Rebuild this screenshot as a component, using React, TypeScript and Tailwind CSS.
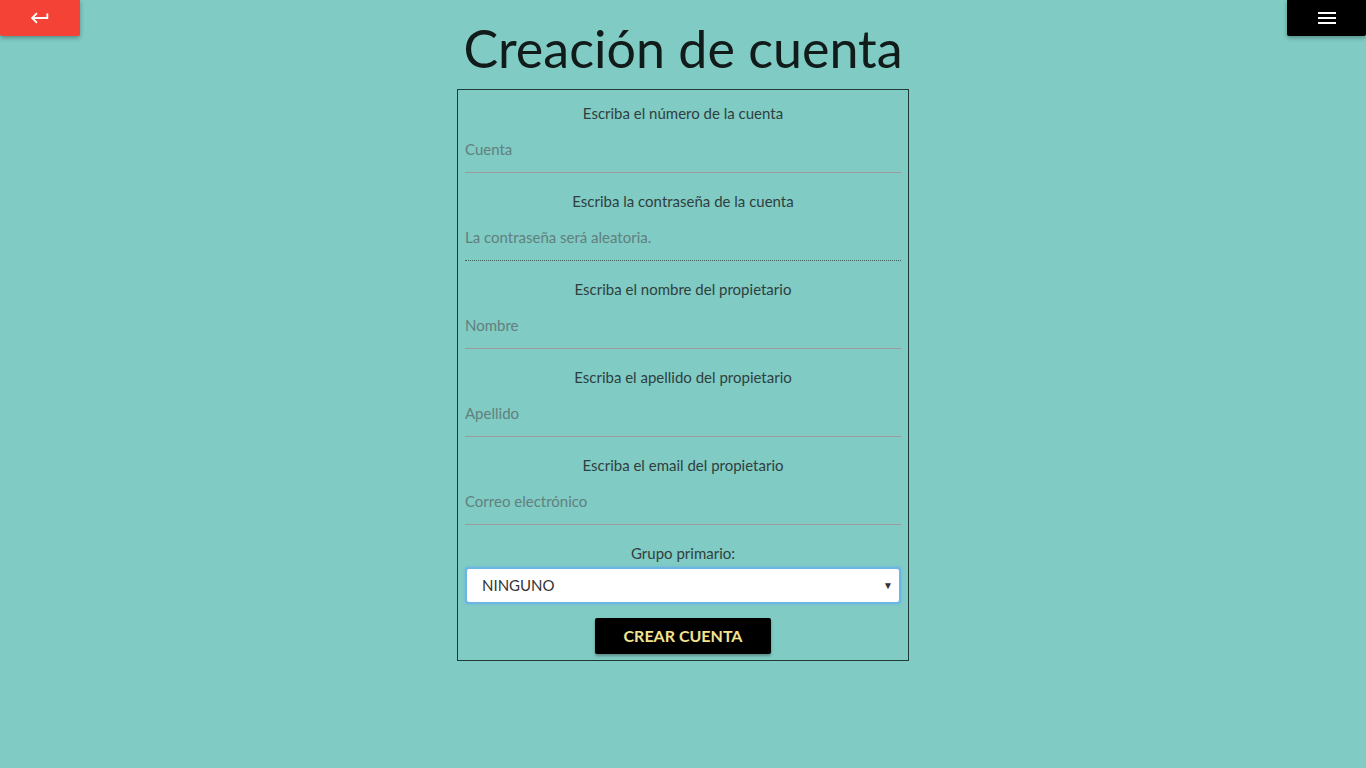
import React from "react";

const fields = [
  { label: "Escriba el número de la cuenta", ph: "Cuenta" },
  { label: "Escriba la contraseña de la cuenta", ph: "La contraseña será aleatoria.", disabled: true },
  { label: "Escriba el nombre del propietario", ph: "Nombre" },
  { label: "Escriba el apellido del propietario", ph: "Apellido" },
  { label: "Escriba el email del propietario", ph: "Correo electrónico" },
];

export default function App() {
  return (
    <div
      className="min-h-[768px] w-full bg-[#80cbc4] relative"
      style={{ fontFamily: "Lato, 'Open Sans', sans-serif" }}
    >
      <button className="absolute left-0 top-0 w-[80px] h-[36px] bg-[#f44336] rounded-b-[2px] flex items-center justify-center shadow-[0_2px_4px_rgba(0,0,0,0.3)]">
        <svg width="22" height="22" viewBox="0 0 24 24" fill="white">
          <path d="M19 7v4H5.83l3.58-3.59L8 6l-6 6 6 6 1.41-1.41L5.83 13H21V7z" />
        </svg>
      </button>
      <button className="absolute right-0 top-0 w-[79px] h-[36px] bg-black rounded-b-[2px] flex items-center justify-center shadow-[0_2px_4px_rgba(0,0,0,0.3)]">
        <svg width="24" height="24" viewBox="0 0 24 24" fill="white">
          <path d="M3 18h18v-2H3v2zm0-5h18v-2H3v2zm0-7v2h18V6H3z" />
        </svg>
      </button>

      <div className="flex flex-col items-center pt-[17px]">
        <h1 className="text-[52px] leading-[62px] text-[#111b1a] font-normal mb-[10px]">
          Creación de cuenta
        </h1>
        <div className="w-[452px] border border-[#1f3b38] px-[7px] pb-[6px]">
          {fields.map((f) => (
            <div key={f.label} className="pt-[12px] mb-[5px]">
              <div className="text-center text-[15px] leading-[22px] text-[#2f3f3e]">{f.label}</div>
              <input
                disabled={f.disabled}
                placeholder={f.ph}
                className={
                  "block w-full h-[49px] pt-[2px] bg-transparent outline-none text-[15px] placeholder:text-[#62807d] text-[#62807d] " +
                  (f.disabled
                    ? "border-b border-dotted border-[#3f5f5c]"
                    : "border-b border-[#9e9a9a]")
                }
                style={{ fontFamily: "Lato, sans-serif" }}
              />
            </div>
          ))}
          <div className="pt-[12px]">
            <div className="text-center text-[15px] leading-[22px] text-[#2f3f3e]">Grupo primario:</div>
            <div className="mt-[3px] relative h-[37px] bg-white rounded-[4px] border-[2px] border-[#6cb6e6] shadow-[0_0_3px_rgba(102,179,227,0.9)] flex items-center pl-[15px]">
              <span className="text-[15px] text-[#333]">NINGUNO</span>
              <span className="absolute right-[6px] top-[9px] text-[10px] text-[#333]">▼</span>
            </div>
          </div>
          <div className="flex justify-center mt-[14px]">
            <button className="w-[176px] h-[36px] bg-black rounded-[2px] text-[16px] font-bold text-[#f3e48f] shadow-[0_2px_3px_rgba(0,0,0,0.3)]">
              CREAR CUENTA
            </button>
          </div>
        </div>
      </div>
    </div>
  );
}
